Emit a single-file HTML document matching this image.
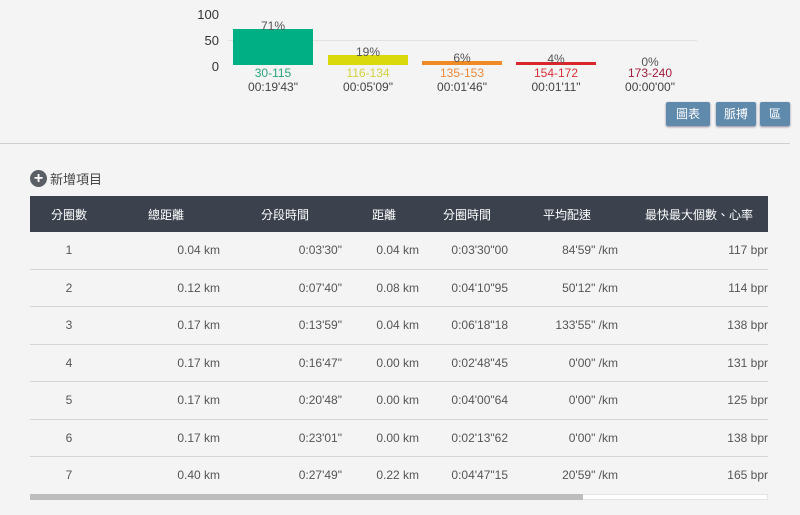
<!DOCTYPE html>
<html><head><meta charset="utf-8"><style>
body{margin:0;width:800px;height:515px;background:#f4f4f4;font-family:"Liberation Sans","Noto Sans CJK TC",sans-serif;color:#555;overflow:hidden;position:relative}
.a{position:absolute;font-size:12px;white-space:nowrap}
.ax{position:absolute;font-size:13px;color:#333;text-align:right;width:30px;left:189px}
.bar{position:absolute}
.lab{position:absolute;width:90px;text-align:center;font-size:12px;line-height:14px}
.btn{position:absolute;top:102px;height:24px;background:#5f8aac;color:#fff;font-size:12px;line-height:24px;text-align:center;border-radius:2px;box-shadow:0 1px 2px #889}
table{position:absolute;left:30px;top:196px;width:738px;border-collapse:collapse;font-size:12px}
th{background:#3b424e;color:#fff;font-weight:normal;height:36px;text-align:left;padding:0}
td{height:36.5px;border-bottom:1px solid #d4d4d4;text-align:right;padding:0;color:#555}
</style></head><body>
<div class="ax" style="top:7px">100</div>
<div class="ax" style="top:33px">50</div>
<div class="ax" style="top:59px">0</div>
<div style="position:absolute;left:228px;top:40px;width:469px;height:1px;background:#e2e2e2"></div>
<div class="bar" style="left:233px;top:29px;width:80px;height:36px;background:#00b084"></div>
<div class="bar" style="left:328px;top:55px;width:80px;height:10px;background:#d9d90b"></div>
<div class="bar" style="left:422px;top:61px;width:80px;height:4px;background:#f08a24"></div>
<div class="bar" style="left:516px;top:62px;width:80px;height:3px;background:#d9262c"></div>
<div class="lab" style="left:228px;top:19px;color:#555">71%</div>
<div class="lab" style="left:323px;top:45px;color:#555">19%</div>
<div class="lab" style="left:417px;top:51px;color:#555">6%</div>
<div class="lab" style="left:511px;top:52px;color:#555">4%</div>
<div class="lab" style="left:605px;top:55px;color:#555">0%</div>
<div class="lab" style="left:228px;top:66px;color:#2aa57a">30-115<br><span style="color:#444">00:19'43"</span></div>
<div class="lab" style="left:323px;top:66px;color:#d2d23c">116-134<br><span style="color:#444">00:05'09"</span></div>
<div class="lab" style="left:417px;top:66px;color:#ee8a3a">135-153<br><span style="color:#444">00:01'46"</span></div>
<div class="lab" style="left:511px;top:66px;color:#d8303a">154-172<br><span style="color:#444">00:01'11"</span></div>
<div class="lab" style="left:605px;top:66px;color:#a01c3c">173-240<br><span style="color:#444">00:00'00"</span></div>
<div class="btn" style="left:666px;width:44px">圖表</div>
<div class="btn" style="left:716px;width:40px">脈搏</div>
<div class="btn" style="left:760px;width:30px">區</div>
<div style="position:absolute;left:0;top:143px;width:790px;height:1px;background:#cfcfcf"></div>
<div style="position:absolute;left:30px;top:170px;width:17px;height:17px;border-radius:50%;background:#5a5f66;color:#fff;font-size:16px;line-height:17px;text-align:center;font-weight:bold">+</div>
<div class="a" style="left:50px;top:169px;font-size:13px;color:#444">新增項目</div>
<table>
<tr><th style="width:78px;text-align:center">分圈數</th><th style="width:112px;padding-left:0"><span style="margin-left:40px">總距離</span></th><th style="width:122px"><span style="margin-left:41px">分段時間</span></th><th style="width:77px"><span style="margin-left:30px">距離</span></th><th style="width:89px"><span style="margin-left:24px">分圈時間</span></th><th style="width:110px"><span style="margin-left:35px">平均配速</span></th><th><span style="margin-left:27px">最快最大個數、心率</span></th></tr>
<tr><td style="text-align:center">1</td><td>0.04 km</td><td>0:03'30"</td><td>0.04 km</td><td>0:03'30"00</td><td>84'59" /km</td><td>117 bpr</td></tr>
<tr><td style="text-align:center">2</td><td>0.12 km</td><td>0:07'40"</td><td>0.08 km</td><td>0:04'10"95</td><td>50'12" /km</td><td>114 bpr</td></tr>
<tr><td style="text-align:center">3</td><td>0.17 km</td><td>0:13'59"</td><td>0.04 km</td><td>0:06'18"18</td><td>133'55" /km</td><td>138 bpr</td></tr>
<tr><td style="text-align:center">4</td><td>0.17 km</td><td>0:16'47"</td><td>0.00 km</td><td>0:02'48"45</td><td>0'00" /km</td><td>131 bpr</td></tr>
<tr><td style="text-align:center">5</td><td>0.17 km</td><td>0:20'48"</td><td>0.00 km</td><td>0:04'00"64</td><td>0'00" /km</td><td>125 bpr</td></tr>
<tr><td style="text-align:center">6</td><td>0.17 km</td><td>0:23'01"</td><td>0.00 km</td><td>0:02'13"62</td><td>0'00" /km</td><td>138 bpr</td></tr>
<tr><td style="text-align:center">7</td><td>0.40 km</td><td>0:27'49"</td><td>0.22 km</td><td>0:04'47"15</td><td>20'59" /km</td><td>165 bpr</td></tr>
</table>
<div style="position:absolute;left:30px;top:494px;width:738px;height:6px;background:#fff;border:1px solid #e4e4e4;box-sizing:border-box"></div>
<div style="position:absolute;left:30px;top:494px;width:553px;height:6px;background:#bdbdbd"></div>
</body></html>
